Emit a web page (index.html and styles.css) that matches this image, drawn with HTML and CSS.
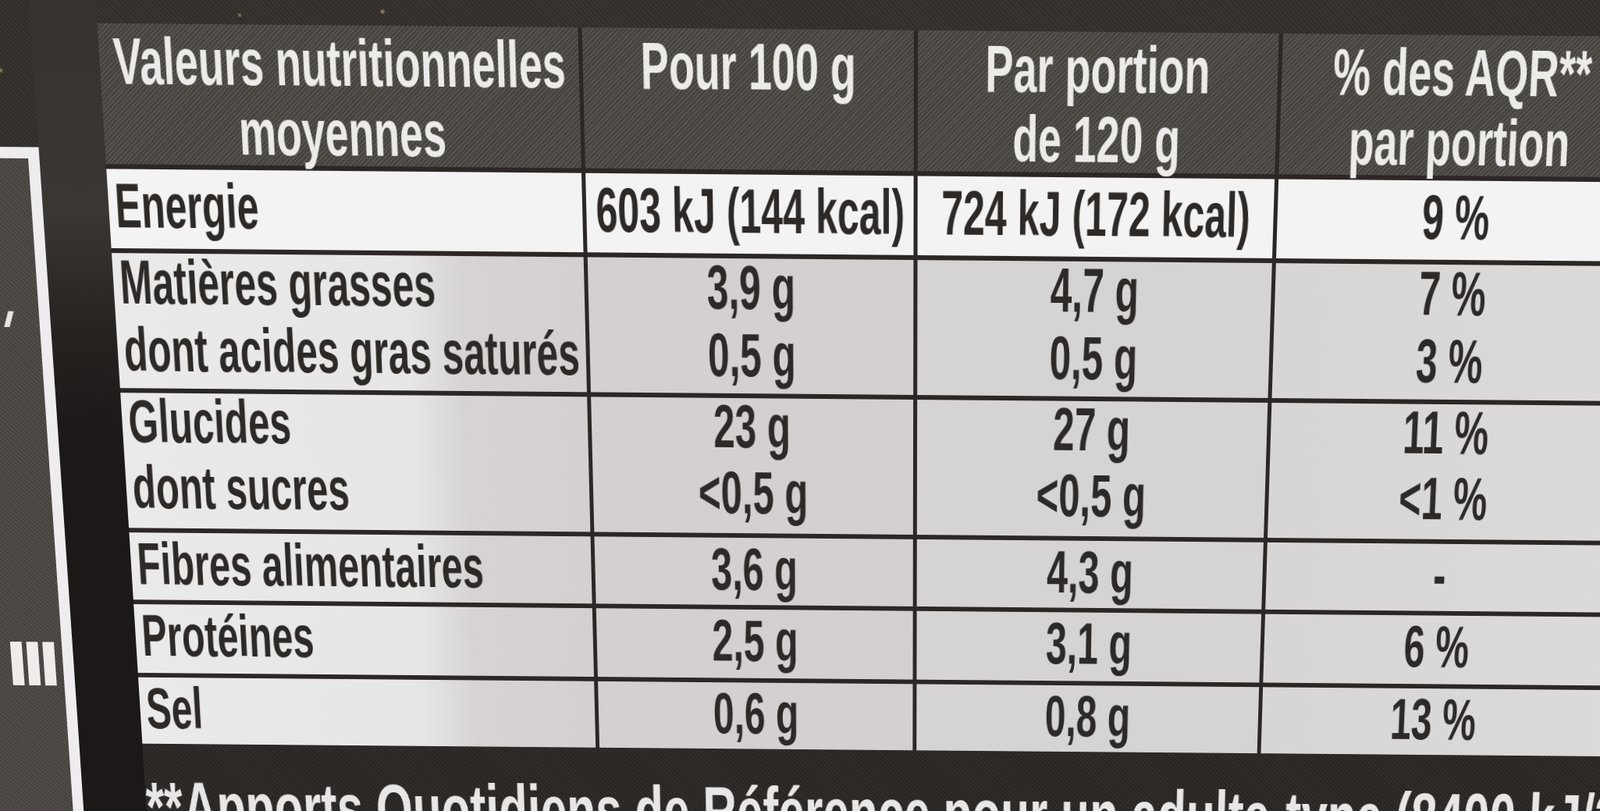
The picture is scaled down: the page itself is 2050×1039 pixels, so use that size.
FILE: index.html
```html
<!DOCTYPE html>
<html lang="fr">
<head>
<meta charset="utf-8">
<title>Valeurs nutritionnelles moyennes</title>
<link rel="stylesheet" href="styles.css">
</head>
<body>
<div class="sheet">
  <div class="aside">
    <div class="panel-col">
      <div class="glitter-top"></div>
      <div class="panel">
        <div class="mark"></div>
        <div class="bars"><i></i><i></i><i></i></div>
      </div>
    </div>
    <div class="gutter"></div>
  </div>
  <div class="main">
    <div class="glitter-band"></div>
    <div class="table">
      <div class="cell h c1"><span class="t">Valeurs nutritionnelles</span><span class="t">moyennes</span></div>
      <div class="cell h"><span class="t">Pour 100 g</span></div>
      <div class="cell h"><span class="t">Par portion</span><span class="t">de 120 g</span></div>
      <div class="cell h c4"><span class="t">% des AQR**</span><span class="t">par portion</span></div>

      <div class="cell b hi c1 left"><span class="t">Energie</span></div>
      <div class="cell b hi"><span class="t">603 kJ (144 kcal)</span></div>
      <div class="cell b hi"><span class="t">724 kJ (172 kcal)</span></div>
      <div class="cell b hi c4"><span class="t">9 %</span></div>

      <div class="cell b c1 left"><span class="t">Matières grasses</span><span class="t">dont acides gras saturés</span></div>
      <div class="cell b c2"><span class="t">3,9 g</span><span class="t">0,5 g</span></div>
      <div class="cell b c3"><span class="t">4,7 g</span><span class="t">0,5 g</span></div>
      <div class="cell b c4"><span class="t">7 %</span><span class="t">3 %</span></div>

      <div class="cell b c1 left"><span class="t">Glucides</span><span class="t">dont sucres</span></div>
      <div class="cell b c2"><span class="t">23 g</span><span class="t">&lt;0,5 g</span></div>
      <div class="cell b c3"><span class="t">27 g</span><span class="t">&lt;0,5 g</span></div>
      <div class="cell b c4"><span class="t">11 %</span><span class="t">&lt;1 %</span></div>

      <div class="cell b s c1 left"><span class="t">Fibres alimentaires</span></div>
      <div class="cell b s c2"><span class="t">3,6 g</span></div>
      <div class="cell b s c3"><span class="t">4,3 g</span></div>
      <div class="cell b s c4"><span class="t">-</span></div>

      <div class="cell b s c1 left"><span class="t">Protéines</span></div>
      <div class="cell b s c2"><span class="t">2,5 g</span></div>
      <div class="cell b s c3"><span class="t">3,1 g</span></div>
      <div class="cell b s c4"><span class="t">6 %</span></div>

      <div class="cell b s c1 left"><span class="t">Sel</span></div>
      <div class="cell b s c2"><span class="t">0,6 g</span></div>
      <div class="cell b s c3"><span class="t">0,8 g</span></div>
      <div class="cell b s c4"><span class="t">13 %</span></div>
    </div>
    <div class="footer"><span class="t">**Apports Quotidiens de Référence pour un adulte-type (8400 kJ/2000 kcal)</span></div>
  </div>
</div>
</body>
</html>
```

FILE: styles.css
```css
html, body {
  margin: 0;
  padding: 0;
}
body {
  width: 2050px;
  height: 1039px;
  overflow: hidden;
  background: #2b2725;
  font-family: "Liberation Sans", Arial, sans-serif;
  font-weight: 700;
}

.sheet {
  display: flex;
  width: 2185px;
  margin-left: -60px;
  transform-origin: 1340px 590px;
  transform: rotate(0.5deg) perspective(1500px) rotateX(-5.46deg);
  filter: blur(0.6px);
}

/* ---------- left strip ---------- */
.aside {
  display: flex;
  width: 219px;
  flex: none;
}
.panel-col {
  width: 136px;
  display: flex;
  flex-direction: column;
}
.glitter-top {
  height: 207px;
  flex: none;
  background-color: #312d2a;
  background-image:
    radial-gradient(circle at 30% 20%, rgba(214,190,110,.55) 0 2px, transparent 3px),
    radial-gradient(circle at 70% 55%, rgba(214,190,110,.45) 0 2px, transparent 3px),
    radial-gradient(circle at 55% 85%, rgba(230,230,230,.35) 0 1.5px, transparent 2.5px),
    repeating-linear-gradient(45deg, rgba(255,255,255,.04) 0 2px, rgba(0,0,0,.05) 2px 4px);
}
.panel {
  flex: 1;
  background-color: #4a4541;
  background-image: repeating-linear-gradient(45deg, rgba(255,255,255,.05) 0 2px, rgba(0,0,0,.06) 2px 4px);
  border-top: 14px solid #eeecef;
  border-right: 14px solid #eeecef;
  box-shadow: 3px 0 0 #5e559c;
  display: flex;
  flex-direction: column;
}
.mark {
  width: 7px;
  height: 20px;
  margin: 190px 0 0 80px;
  background: #e8e6e4;
  transform: skewX(-18deg);
}
.bars {
  display: flex;
  gap: 6px;
  margin: 407px 0 0 55px;
}
.bars i {
  display: block;
  width: 15px;
  height: 58px;
  background: #efedeb;
}
.gutter {
  width: 83px;
  flex: none;
  background: linear-gradient(180deg, #36322f 0%, #3a3633 26%, #262220 40%, #1c1817 52%, #1c1817 100%);
}

/* ---------- table ---------- */
.main {
  width: 1966px;
  flex: none;
  display: flex;
  flex-direction: column;
}
.glitter-band {
  height: 56px;
  background-color: #322e2b;
  background-image:
    radial-gradient(circle at 12% 40%, rgba(214,190,110,.6) 0 2px, transparent 3px),
    radial-gradient(circle at 18% 70%, rgba(214,190,110,.5) 0 2px, transparent 3px),
    radial-gradient(circle at 22% 30%, rgba(230,230,220,.45) 0 1.5px, transparent 2.5px),
    radial-gradient(circle at 9% 80%, rgba(214,190,110,.45) 0 1.5px, transparent 2.5px),
    repeating-linear-gradient(45deg, rgba(255,255,255,.04) 0 2px, rgba(0,0,0,.05) 2px 4px);
}
.table {
  display: grid;
  grid-template-columns: 595px 411px 447px 498px;
  grid-template-rows: 171px 98px 170px 174px 88px 91px 89px;
  column-gap: 5px;
  row-gap: 6px;
  background: #2c2725;
}
.cell {
  display: flex;
  flex-direction: column;
  align-items: center;
  line-height: 85px;
  overflow: visible;
}
.cell.left {
  align-items: flex-start;
  padding-left: 8px;
}
.cell.c4 {
  padding-right: 50px;
}
.t {
  display: inline-block;
  white-space: nowrap;
  transform-origin: center;
}
.left .t {
  transform-origin: left center;
}

.h {
  font-size: 80px;
  line-height: 85px;
  color: #ecebe9;
  background-color: #4a4642;
  background-image: repeating-linear-gradient(-45deg, rgba(255,255,255,.07) 0 2px, rgba(0,0,0,.08) 2px 4px);
}
.h .t {
  transform: scaleX(0.654);
}
.h .t:first-child {
  margin-top: 3px;
}

.b {
  font-size: 78px;
  color: #2d2927;
  background: #d4d1d0;
}
.b .t {
  transform: scaleX(0.63);
}
.b .t:first-child {
  margin-top: -6px;
}
.b.hi .t:first-child {
  margin-top: 3px;
}
.b.s .t:first-child {
  margin-top: -1px;
}
.b.hi {
  background: #f3f3f3;
}
.b.c1:not(.hi) {
  background: linear-gradient(90deg, #ebeaeb 0%, #e7e6e7 62%, #d6d3d2 74%, #d3d0cf 100%);
}
.b.c2 {
  background: #d3d0cf;
}
.b.c3 {
  background: #d6d4d3;
}
.b.c4:not(.hi) {
  background: linear-gradient(90deg, #d8d6d5 0%, #dddbda 100%);
}

/* ---------- footer ---------- */
.footer {
  padding-top: 43px;
  height: 128px;
  box-sizing: border-box;
  font-size: 94px;
  line-height: 85px;
  color: #e9e7e5;
  background-color: #2a2624;
  background-image: repeating-linear-gradient(45deg, rgba(255,255,255,.035) 0 2px, rgba(0,0,0,.05) 2px 4px);
}
.footer .t {
  transform: scaleX(0.66);
  transform-origin: left center;
}
```
